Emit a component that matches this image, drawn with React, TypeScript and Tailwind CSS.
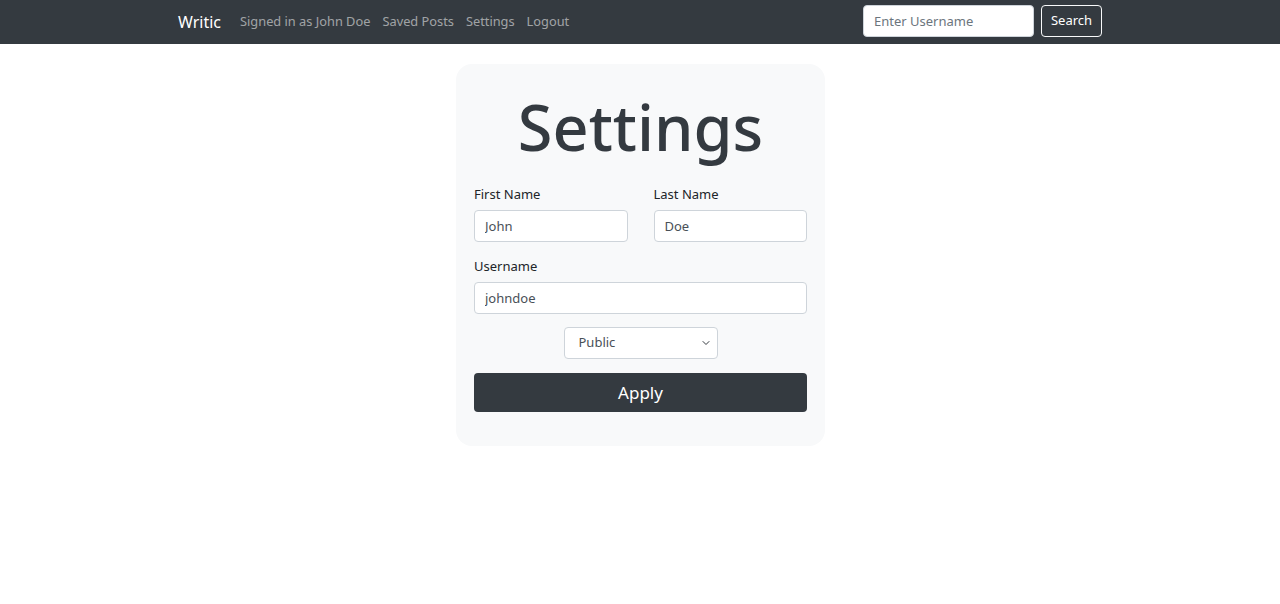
import React from "react";

const font = { fontFamily: '"Noto Sans", "Open Sans", Arial, sans-serif' };

function Navbar() {
  return (
    <nav className="h-[44px] w-full bg-[#343a40]">
      <div className="mx-auto flex h-full w-[924px] items-center justify-between">
        <div className="flex items-center">
          <a className="mr-[19px] text-[16px] text-white">Writic</a>
          <ul className="flex items-center gap-[12px] text-[12.8px] text-[#ffffff8c]">
            <li>Signed in as John Doe</li>
            <li>Saved Posts</li>
            <li>Settings</li>
            <li>Logout</li>
          </ul>
        </div>
        <form className="flex items-center gap-[7px] self-start pt-[5px]">
          <input
            type="text"
            placeholder="Enter Username"
            className="h-[32px] w-[171px] rounded-[4px] border border-[#ced4da] bg-white px-[10px] text-[13px] text-[#495057] outline-none placeholder:text-[#6c757d]"
          />
          <button
            type="button"
            className="h-[32px] w-[61px] rounded-[4px] border border-[#f8f9fa] text-[13px] text-white"
          >
            Search
          </button>
        </form>
      </div>
    </nav>
  );
}

function Field({ label, value }: { label: string; value: string }) {
  return (
    <div className="flex flex-col">
      <label className="mb-[6px] block text-[13px] leading-[20px] text-[#212529]">{label}</label>
      <input
        type="text"
        defaultValue={value}
        className="h-[32px] w-full rounded-[4px] border border-[#ced4da] bg-white px-[10px] text-[13px] text-[#495057] outline-none"
      />
    </div>
  );
}

export default function App() {
  return (
    <div className="min-h-[604px] bg-white" style={font}>
      <Navbar />
      <main className="flex justify-center pt-[20px]">
        <div className="ml-[1px] w-[369px] rounded-[16px] bg-[#f8f9fa] px-[18px] pt-[31px] pb-[34px]">
          <h1 className="text-center text-[63px] leading-none font-medium text-[#343a40]">
            Settings
          </h1>
          <div className="mt-[26px] grid grid-cols-2 gap-x-[26px]">
            <Field label="First Name" value="John" />
            <Field label="Last Name" value="Doe" />
          </div>
          <div className="mt-[14px]">
            <Field label="Username" value="johndoe" />
          </div>
          <div className="mt-[13px] flex justify-center">
            <div className="relative w-[154px]">
              <select
                defaultValue="public"
                className="h-[32px] w-full appearance-none rounded-[4px] border border-[#ced4da] bg-white pl-[14px] text-[13px] text-[#495057] outline-none"
              >
                <option value="public">Public</option>
                <option value="private">Private</option>
              </select>
              <svg
                className="pointer-events-none absolute right-[8px] top-[12px] h-[8px] w-[8px]"
                viewBox="0 0 16 16"
                fill="none"
                stroke="#343a40"
                strokeWidth="2"
                strokeLinecap="round"
                strokeLinejoin="round"
              >
                <path d="M2 5l6 6 6-6" />
              </svg>
            </div>
          </div>
          <button
            type="button"
            className="mt-[14px] h-[39px] w-full rounded-[4px] bg-[#343a40] text-[17px] text-white"
          >
            Apply
          </button>
        </div>
      </main>
    </div>
  );
}
